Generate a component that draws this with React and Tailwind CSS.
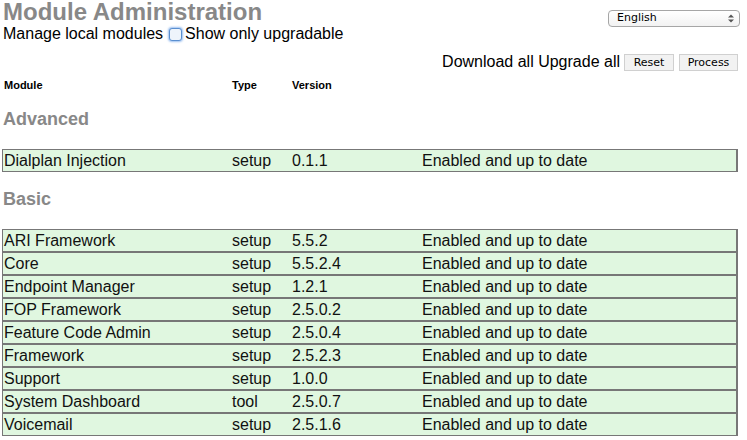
const advanced = [{ name: 'Dialplan Injection', type: 'setup', version: '0.1.1' }];

const basic = [
  { name: 'ARI Framework', type: 'setup', version: '5.5.2' },
  { name: 'Core', type: 'setup', version: '5.5.2.4' },
  { name: 'Endpoint Manager', type: 'setup', version: '1.2.1' },
  { name: 'FOP Framework', type: 'setup', version: '2.5.0.2' },
  { name: 'Feature Code Admin', type: 'setup', version: '2.5.0.4' },
  { name: 'Framework', type: 'setup', version: '2.5.2.3' },
  { name: 'Support', type: 'setup', version: '1.0.0' },
  { name: 'System Dashboard', type: 'tool', version: '2.5.0.7' },
  { name: 'Voicemail', type: 'setup', version: '2.5.1.6' },
];

const ModuleRow = ({ m }) => (
  <div className="flex items-center h-[23px] ml-[2px] w-[736px] bg-[#e0f7e0] border border-[#777777] border-r-2 text-[16px] leading-[20px] text-[#111]">
    <span className="w-[229px] pl-[1px]">{m.name}</span>
    <span className="w-[60px]">{m.type}</span>
    <span className="w-[130px]">{m.version}</span>
    <span>Enabled and up to date</span>
  </div>
);

const Category = ({ title }) => (
  <div className="h-[24px] flex items-center pl-[3px] text-[18px] font-bold text-[#888888]">{title}</div>
);

export default function App() {
  return (
    <div className="w-[747px] h-[440px] bg-white overflow-hidden font-['Liberation_Sans',Arial,sans-serif] text-black">
      <div className="flex justify-between">
        <div>
          <h1 className="leading-[24px] pl-[3px] text-[24px] font-bold text-[#888888]">Module Administration</h1>
          <div className="h-[20px] flex items-center pl-[3px] text-[16px]">
            <span>Manage local modules</span>
            <span className="ml-[6px] mr-[3px] w-[13px] h-[13px] rounded-[3px] border border-[#5a8fd0] bg-[#eef4fb] shadow-[0_0_2px_1px_rgba(90,150,230,0.6)]"></span>
            <span>Show only upgradable</span>
          </div>
        </div>
        <div className="pt-[10px] pr-[7px]">
          <div className="w-[132px] h-[17px] rounded-[4px] border border-[#a6a6a6] bg-gradient-to-b from-white to-[#f2f2f2] flex items-center justify-between pl-[8px] pr-[5px] text-[11px] font-['DejaVu_Sans',sans-serif]">
            <span>English</span>
            <svg width="6" height="9" viewBox="0 0 6 9">
              <path d="M0 3.5 L3 0.5 L6 3.5 Z" fill="#555" />
              <path d="M0 5.5 L3 8.5 L6 5.5 Z" fill="#555" />
            </svg>
          </div>
        </div>
      </div>

      <div className="mt-[8px] h-[20px] flex items-center justify-end pr-[9px] text-[16px]">
        <span className="mr-[4px]">Download all Upgrade all</span>
        <button className="h-[17px] w-[50px] mr-[5px] bg-[#f2f2f2] border border-[#d0d0d0] text-[11px] font-['DejaVu_Sans',sans-serif]">Reset</button>
        <button className="h-[17px] w-[59px] bg-[#f2f2f2] border border-[#d0d0d0] text-[11px] font-['DejaVu_Sans',sans-serif]">Process</button>
      </div>

      <div className="mt-[4px] h-[18px] flex items-center text-[11px] font-bold pl-[4px]">
        <span className="w-[228px]">Module</span>
        <span className="w-[60px]">Type</span>
        <span>Version</span>
      </div>

      <div className="mt-[13px]">
        <Category title="Advanced" />
      </div>
      <div className="mt-[18px]">
        {advanced.map((m) => (
          <ModuleRow key={m.name} m={m} />
        ))}
      </div>

      <div className="mt-[15px]">
        <Category title="Basic" />
      </div>
      <div className="mt-[18px]">
        {basic.map((m) => (
          <ModuleRow key={m.name} m={m} />
        ))}
      </div>
    </div>
  );
}
